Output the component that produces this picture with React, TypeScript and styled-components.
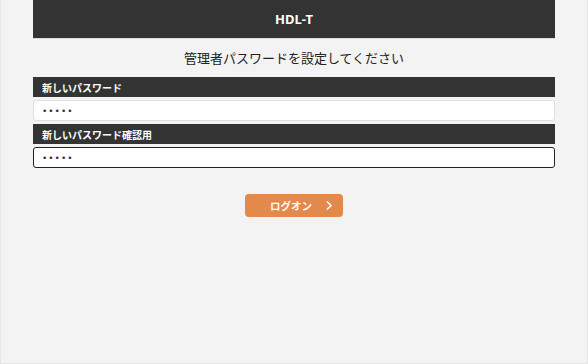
import React from "react";
import styled, { createGlobalStyle } from "styled-components";

const GlobalStyle = createGlobalStyle`
  html, body {
    margin: 0;
    padding: 0;
    background: #f3f3f3;
  }
  body {
    font-family: "Noto Sans CJK JP", "Noto Sans", sans-serif;
    color: #333;
  }
`;

const Page = styled.div`
  box-sizing: border-box;
  width: 588px;
  height: 364px;
  padding: 0 32px;
  background: #f3f3f3;
  border: 1px solid #e6e6e6;
  border-top: none;
`;

const Header = styled.header`
  height: 38px;
  background: #333333;
  color: #fff;
  display: flex;
  align-items: center;
  justify-content: center;
  font-family: "Noto Sans", "Noto Sans CJK JP", sans-serif;
  font-weight: bold;
  font-size: 13px;
  box-shadow: 0 1px 0 #dcdcdc;
`;

const Lead = styled.p`
  margin: 0;
  height: 39px;
  display: flex;
  align-items: center;
  justify-content: center;
  font-size: 13px;
  color: #222;
`;

const Form = styled.form`
  display: flex;
  flex-direction: column;
  gap: 3px;
`;

const Label = styled.label`
  height: 20px;
  background: #333333;
  color: #fff;
  font-size: 10px;
  font-weight: bold;
  display: flex;
  align-items: center;
  padding-left: 9px;
`;

const Input = styled.input<{ $focused?: boolean }>`
  box-sizing: border-box;
  height: 21px;
  margin: 0;
  border: 1px solid ${(p) => (p.$focused ? "#222" : "#e0e0e0")};
  border-radius: 3px;
  background: #fff;
  padding: 0 8px;
  font-size: 9px;
  font-family: "DejaVu Sans", sans-serif;
  letter-spacing: 1px;
  color: #333;
  outline: none;
`;

const Actions = styled.div`
  display: flex;
  justify-content: center;
  margin-top: 26px;
`;

const Button = styled.button`
  width: 98px;
  height: 23px;
  border: none;
  border-radius: 4px;
  background: #e3894b;
  color: #fff;
  font-family: "Noto Sans CJK JP", sans-serif;
  font-weight: bold;
  font-size: 10.5px;
  display: flex;
  align-items: center;
  justify-content: center;
  position: relative;
  padding: 0 6px 0 0;
  svg {
    position: absolute;
    right: 10px;
    top: 6px;
  }
`;

export default function App() {
  return (
    <>
      <GlobalStyle />
      <Page>
        <Header>HDL-T</Header>
        <Lead>管理者パスワードを設定してください</Lead>
        <Form>
          <Label>新しいパスワード</Label>
          <Input type="password" defaultValue="12345" />
          <Label>新しいパスワード確認用</Label>
          <Input type="password" defaultValue="12345" $focused />
        </Form>
        <Actions>
          <Button type="button">
            ログオン
            <svg width="8" height="11" viewBox="0 0 8 11">
              <path d="M2 1.5 L6 5.5 L2 9.5" fill="none" stroke="#fff" strokeWidth="1.6" />
            </svg>
          </Button>
        </Actions>
      </Page>
    </>
  );
}
